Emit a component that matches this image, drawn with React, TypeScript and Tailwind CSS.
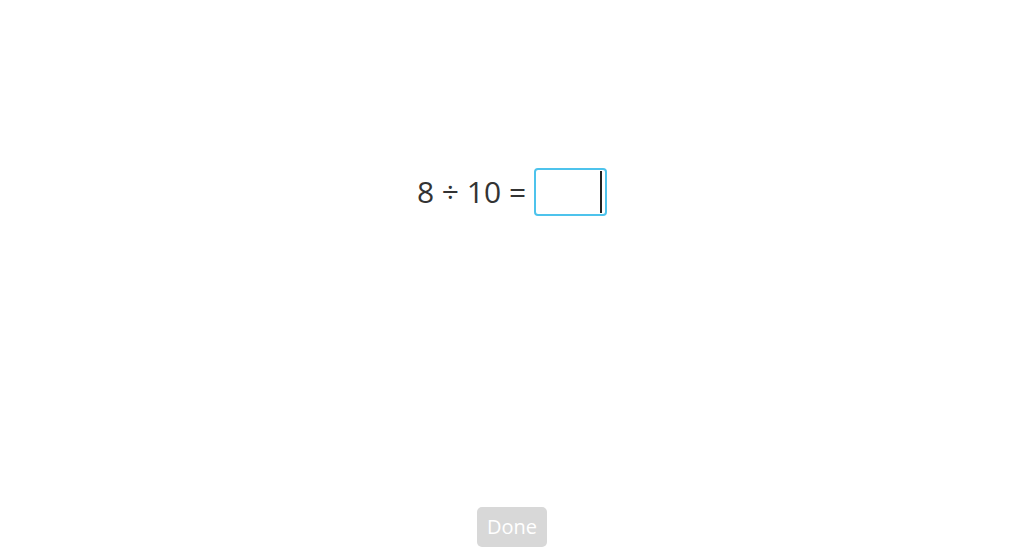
import React from "react";

export default function App() {
  return (
    <div
      className="w-[1024px] h-[560px] bg-white flex flex-col items-center"
      style={{ fontFamily: '"Open Sans", sans-serif' }}
    >
      <div className="pt-[168px] flex items-center">
        <span className="text-[30px] text-[#333333] leading-none">8 ÷ 10 =</span>
        <div className="ml-[8px] w-[73px] h-[48px] border-2 border-[#4dc3ec] rounded-[4px] flex items-center justify-end pr-[3px]">
          <div className="w-[2px] h-[42px] bg-[#222222]" />
        </div>
      </div>
      <div className="flex-1" />
      <button className="mb-[13px] w-[70px] h-[40px] rounded-[5px] bg-[#d8d8d8] text-white text-[20px] leading-none">
        Done
      </button>
    </div>
  );
}
